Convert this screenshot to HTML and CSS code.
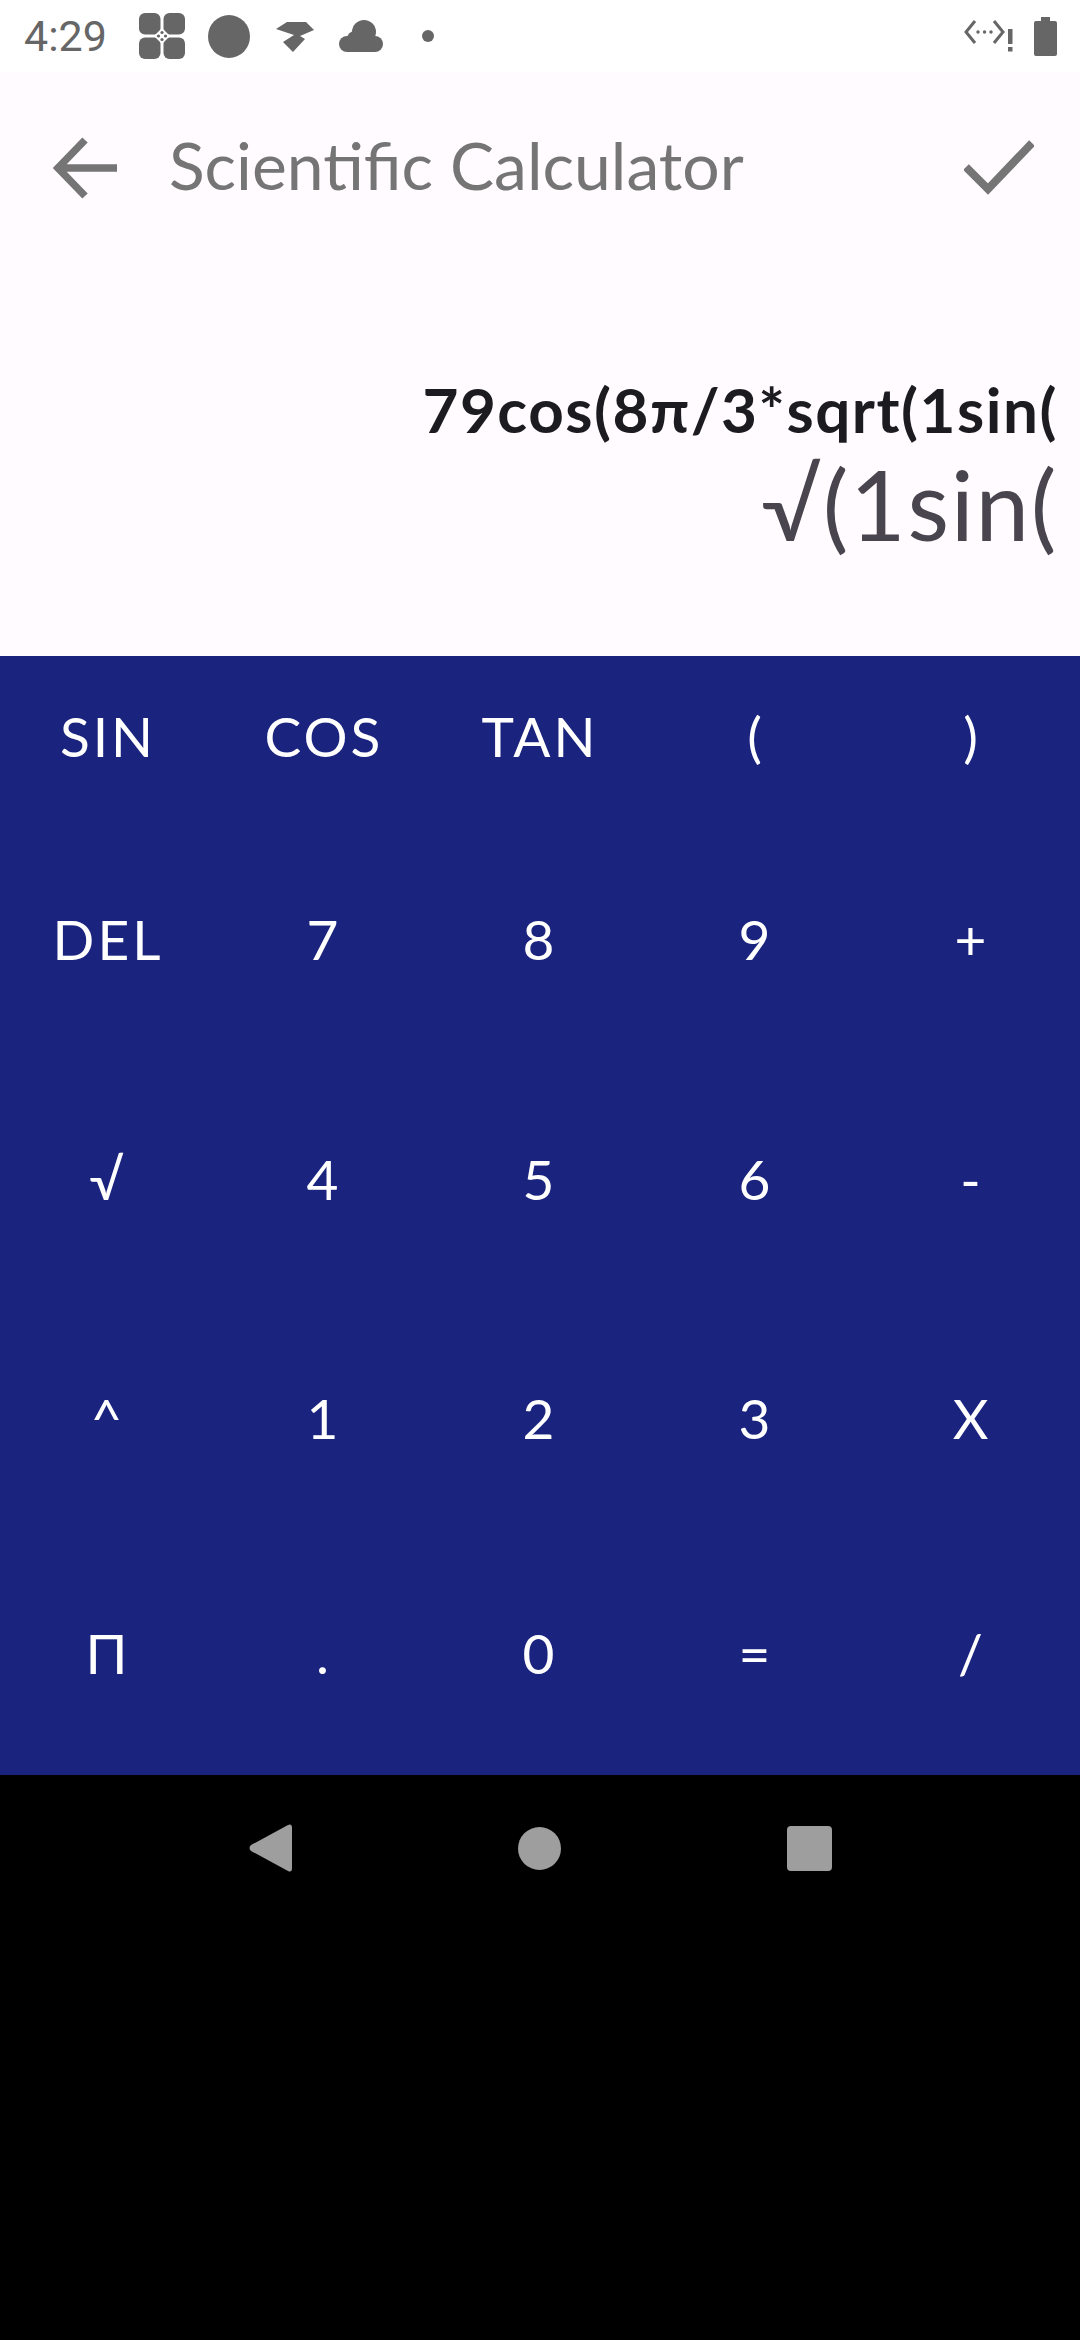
FILE: index.html
```html
<!DOCTYPE html>
<html lang="en">
<head>
  <meta charset="UTF-8">
  <meta name="viewport" content="width=device-width, initial-scale=1.0">
  <title>Scientific Calculator</title>
  <link rel="stylesheet" href="styles.css">
</head>
<body>
  <div class="status-bar">
    <span class="clock">4:29</span>
    <svg class="status-icon grid-icon" width="46" height="46" viewBox="0 0 46 46">
      <rect x="0" y="0" width="21.5" height="21.5" rx="6"/>
      <rect x="24.5" y="0" width="21.5" height="21.5" rx="6"/>
      <rect x="0" y="24.5" width="21.5" height="21.5" rx="6"/>
      <rect x="24.5" y="24.5" width="21.5" height="21.5" rx="6"/>
      <path d="M23 15l8 8-8 8-8-8z" fill="#fff"/>
      <circle cx="23" cy="19.5" r="1.6"/><circle cx="23" cy="26.5" r="1.6"/>
      <circle cx="19.5" cy="23" r="1.6"/><circle cx="26.5" cy="23" r="1.6"/>
    </svg>
    <svg class="status-icon circle-icon" width="42" height="43" viewBox="0 0 42 43"><ellipse cx="21" cy="21.5" rx="21" ry="21.5"/></svg>
    <svg class="status-icon bird-icon" width="38" height="31" viewBox="0 0 38 31">
      <path d="M0 8L11 1h19l8 8-14 6 5 3-12 13-10-10 11-7z"/>
    </svg>
    <svg class="status-icon cloud-icon" width="44" height="33" viewBox="0 0 44 33">
      <circle cx="8" cy="24" r="8"/><circle cx="16" cy="19" r="8"/><circle cx="25" cy="12" r="12"/>
      <circle cx="36" cy="24" r="8"/><rect x="8" y="20" width="28" height="12"/>
    </svg>
    <svg class="status-icon dot-icon" width="12" height="12" viewBox="0 0 12 12"><circle cx="6" cy="6" r="6"/></svg>
    <span class="status-spacer"></span>
    <svg class="status-icon net-icon" width="49" height="32" viewBox="0 0 49 32">
      <path d="M11 1L2 12l9 11M30 1l9 11-9 11" fill="none" stroke="#666" stroke-width="3"/>
      <circle cx="14" cy="12" r="1.7"/><circle cx="20.5" cy="12" r="1.7"/><circle cx="27" cy="12" r="1.7"/>
      <rect x="44" y="9" width="4.5" height="15"/><rect x="44" y="27" width="4.5" height="4.5"/>
    </svg>
    <svg class="status-icon battery-icon" width="23" height="39" viewBox="0 0 23 39">
      <path d="M7 0h9v4h5a2 2 0 0 1 2 2v31a2 2 0 0 1-2 2H2a2 2 0 0 1-2-2V6a2 2 0 0 1 2-2h5z"/>
    </svg>
  </div>

  <div class="display">
    <div class="app-bar">
      <svg class="back" width="64" height="62" viewBox="0 0 64 62">
        <path d="M64 31H6M32 3L5 31l27 28" fill="none" stroke="#757575" stroke-width="7.5"/>
      </svg>
      <span class="title">Scientific Calculator</span>
      <svg class="check" width="70" height="56" viewBox="0 0 70 56">
        <path d="M2 27l22 22L68 3" fill="none" stroke="#757575" stroke-width="8"/>
      </svg>
    </div>
    <div class="expression">79cos(8π/3*sqrt(1sin(</div>
    <div class="result">√(1sin(</div>
  </div>

  <div class="keypad">
    <div class="row"><span>SIN</span><span>COS</span><span>TAN</span><span>(</span><span>)</span></div>
    <div class="row"><span>DEL</span><span>7</span><span>8</span><span>9</span><span>+</span></div>
    <div class="row"><span>√</span><span>4</span><span>5</span><span>6</span><span>-</span></div>
    <div class="row"><span>^</span><span>1</span><span>2</span><span>3</span><span>X</span></div>
    <div class="row"><span>Π</span><span>.</span><span>0</span><span>=</span><span>/</span></div>
  </div>

  <div class="nav-bar">
    <svg width="43" height="48" viewBox="0 0 43 48"><path d="M39 1q4-2 4 3v40q0 5-4 3L2 27q-3-3 0-6z" fill="#9e9e9e"/></svg>
    <svg width="43" height="43" viewBox="0 0 43 43"><circle cx="21.5" cy="21.5" r="21.5" fill="#9e9e9e"/></svg>
    <svg width="45" height="45" viewBox="0 0 45 45"><rect width="45" height="45" rx="4" fill="#9e9e9e"/></svg>
  </div>
</body>
</html>
```

FILE: styles.css
```css
body {
  margin: 0;
  width: 1080px;
  height: 2340px;
  background: #000;
  font-family: 'Lato', 'Noto Sans', sans-serif;
  display: flex;
  flex-direction: column;
  overflow: hidden;
}
.status-bar {
  height: 72px;
  background: #fff;
  display: flex;
  align-items: center;
  padding: 0 23px 0 24px;
  box-sizing: border-box;
}
.clock {
  font-family: 'Roboto', sans-serif;
  font-size: 43px;
  color: #666;
}
.status-icon {
  fill: #666;
  flex: none;
}
.grid-icon { margin-left: 32px; }
.circle-icon { margin-left: 23px; }
.bird-icon { margin-left: 26px; }
.cloud-icon { margin-left: 25px; }
.dot-icon { margin-left: 39px; }
.battery-icon { margin-left: 21px; }
.status-spacer {
  flex: 1;
}
.display {
  height: 584px;
  background: #fffbfe;
  display: flex;
  flex-direction: column;
  padding-right: 22px;
}
.app-bar {
  height: 192px;
  display: flex;
  align-items: center;
  margin-right: -22px;
  padding: 0 46px 0 53px;
}
.title {
  flex: 1;
  font-size: 66px;
  color: #757575;
  margin-left: 52px;
  padding-bottom: 8px;
}
.expression {
  margin-top: 103px;
  text-align: right;
  font-size: 62px;
  font-weight: 700;
  color: #1c1b1f;
  line-height: 84px;
  letter-spacing: 1.5px;
}
.result {
  margin-top: -3px;
  text-align: right;
  font-size: 96px;
  color: #49454f;
  line-height: 112px;
  letter-spacing: 1.7px;
}
.keypad {
  height: 1119px;
  background: #1a237e;
  display: grid;
  grid-template-rows: 160px 245px 235px 244px 235px;
}
.row {
  display: grid;
  grid-template-columns: repeat(5, 216px);
  align-items: center;
  justify-items: center;
  font-size: 55px;
  color: #fff;
  letter-spacing: 3px;
}
.row:last-child {
  padding-bottom: 10px;
}
.nav-bar {
  height: 146px;
  display: flex;
  align-items: center;
  justify-content: center;
  gap: 226px;
}
```
